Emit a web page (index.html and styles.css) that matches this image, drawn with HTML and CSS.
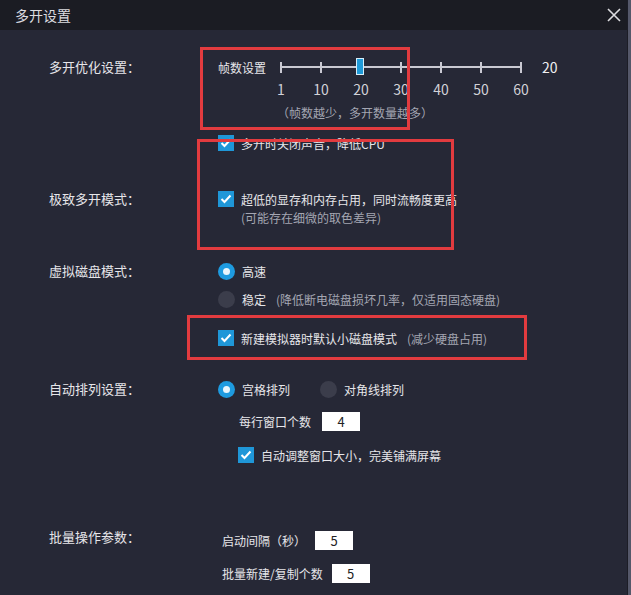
FILE: index.html
```html
<!DOCTYPE html>
<html lang="zh-CN">
<head>
    <meta charset="UTF-8">
    <title>多开设置</title>
    <link rel="stylesheet" href="styles.css">
</head>
<body>
    <div class="window">
        <div class="title-bar">
            <span class="title">多开设置</span>
            <span class="close">
                <svg width="14" height="14" viewBox="0 0 14 14"><path d="M1 1L13 13M13 1L1 13" stroke="#dcdce0" stroke-width="1.6" fill="none"/></svg>
            </span>
        </div>

        <div class="content">
            <!-- 多开优化 -->
            <div class="row">
                <div class="label">多开优化设置：</div>
                <div class="field">
                    <div class="slider-line">
                        <span class="slider-name">帧数设置</span>
                        <div class="track">
                            <i></i><i></i><i></i><i></i><i></i><i></i><i></i>
                            <span class="thumb"></span>
                        </div>
                        <span class="slider-value">20</span>
                    </div>
                    <div class="marks">
                        <span>1</span><span>10</span><span>20</span><span>30</span><span>40</span><span>50</span><span>60</span>
                    </div>
                    <div class="hint fps-hint">（帧数越少，多开数量越多）</div>
                    <div class="line check gap-10">
                        <span class="box"><svg width="12" height="10" viewBox="0 0 12 10"><path d="M1.5 5L4.5 8L10.5 1.5" stroke="#fff" stroke-width="2" fill="none"/></svg></span>
                        多开时关闭声音，降低CPU
                    </div>
                </div>
            </div>

            <!-- 极致多开 -->
            <div class="row gap-36">
                <div class="label">极致多开模式：</div>
                <div class="field">
                    <div class="line check">
                        <span class="box"><svg width="12" height="10" viewBox="0 0 12 10"><path d="M1.5 5L4.5 8L10.5 1.5" stroke="#fff" stroke-width="2" fill="none"/></svg></span>
                        超低的显存和内存占用，同时流畅度更高
                    </div>
                    <div class="hint sub">(可能存在细微的取色差异)</div>
                </div>
            </div>

            <!-- 虚拟磁盘 -->
            <div class="row gap-34">
                <div class="label">虚拟磁盘模式：</div>
                <div class="field">
                    <div class="line"><span class="radio on"></span>高速</div>
                    <div class="line gap-8"><span class="radio"></span>稳定<span class="hint note">(降低断电磁盘损坏几率，仅适用固态硬盘)</span></div>
                    <div class="line check gap-19">
                        <span class="box"><svg width="12" height="10" viewBox="0 0 12 10"><path d="M1.5 5L4.5 8L10.5 1.5" stroke="#fff" stroke-width="2" fill="none"/></svg></span>
                        新建模拟器时默认小磁盘模式<span class="hint small">(减少硬盘占用)</span>
                    </div>
                </div>
            </div>

            <!-- 自动排列 -->
            <div class="row gap-31">
                <div class="label">自动排列设置：</div>
                <div class="field">
                    <div class="line">
                        <span class="radio on"></span>宫格排列
                        <span class="radio second"></span>对角线排列
                    </div>
                    <div class="line gap-12 indent-21">每行窗口个数<span class="input">4</span></div>
                    <div class="line check gap-14 indent-20">
                        <span class="box"><svg width="12" height="10" viewBox="0 0 12 10"><path d="M1.5 5L4.5 8L10.5 1.5" stroke="#fff" stroke-width="2" fill="none"/></svg></span>
                        自动调整窗口大小，完美铺满屏幕
                    </div>
                </div>
            </div>

            <!-- 批量操作 -->
            <div class="row gap-65">
                <div class="label raise">批量操作参数：</div>
                <div class="field">
                    <div class="line indent-4">启动间隔（秒）<span class="input">5</span></div>
                    <div class="line gap-13 indent-4">批量新建/复制个数<span class="input">5</span></div>
                </div>
            </div>
        </div>

        <!-- annotation boxes -->
        <div class="mark mark-fps"></div>
        <div class="mark mark-extreme"></div>
        <div class="mark mark-disk"></div>
    </div>
</body>
</html>
```

FILE: styles.css
```css
body {
    margin: 0;
    background: #55586a;
    font-family: "Noto Sans CJK SC", "Liberation Sans", sans-serif;
    color: #e6e6ea;
}
.window {
    position: relative;
    width: 627px;
    height: 595px;
    background: #262836;
    border-right: 1px solid #1c1d26;
    overflow: hidden;
}
.title-bar {
    height: 30px;
    background: #1b1c23;
    display: flex;
    align-items: center;
    justify-content: space-between;
    padding: 0 6px 0 15px;
}
.title {
    font-size: 14px;
    color: #dcdce0;
}
.close {
    display: flex;
}
.content {
    padding: 27px 0 0 49px;
}
.row {
    display: grid;
    grid-template-columns: 169px 1fr;
}
.label {
    font-size: 13px;
    line-height: 20px;
}
.label.raise {
    margin-top: -3px;
}
.line {
    display: flex;
    align-items: center;
    height: 20px;
    font-size: 12px;
}
.hint {
    color: #a4a6b2;
    font-size: 12px;
}
.fps-hint {
    line-height: 20px;
    margin-top: 4px;
    padding-left: 59px;
}
.sub {
    line-height: 18px;
    padding-left: 23px;
}
.note {
    margin-left: 10px;
}
.small {
    margin-left: 10px;
}

/* slider */
.slider-line {
    display: flex;
    align-items: center;
    height: 20px;
    font-size: 12px;
}
.slider-name {
    width: 62px;
}
.track {
    position: relative;
    width: 242px;
    height: 20px;
    display: flex;
    align-items: center;
    justify-content: space-between;
}
.track::before {
    content: "";
    position: absolute;
    left: 0;
    right: 0;
    top: 9px;
    height: 2px;
    background: #c9c9d2;
}
.track i {
    width: 2px;
    height: 11px;
    background: #c9c9d2;
}
.thumb {
    position: absolute;
    left: 76px;
    top: 1px;
    width: 6px;
    height: 15px;
    background: #1e9ad8;
    border: 1px solid #d6eef9;
}
.slider-value {
    margin-left: 20px;
    font-size: 14px;
    color: #f0f0f2;
}
.marks {
    display: flex;
    margin: 2px 0 0 43px;
    height: 20px;
    line-height: 20px;
    font-size: 14px;
    color: #d2d2d8;
}
.marks span {
    width: 40px;
    text-align: center;
}

/* checkbox & radio */
.box {
    width: 16px;
    height: 16px;
    background: #1f97d8;
    display: flex;
    align-items: center;
    justify-content: center;
    margin-right: 7px;
    flex-shrink: 0;
}
.radio {
    width: 17px;
    height: 17px;
    border-radius: 50%;
    background: #3b3d4b;
    margin-right: 7px;
    box-sizing: border-box;
    position: relative;
    flex-shrink: 0;
}
.radio.on {
    background: #1e9be0;
}
.radio.on::after {
    content: "";
    position: absolute;
    left: 5px;
    top: 5px;
    width: 7px;
    height: 7px;
    border-radius: 50%;
    background: #e9f6fd;
}
.radio.second {
    margin-left: 30px;
}
.input {
    width: 38px;
    height: 19px;
    background: #fff;
    color: #222;
    font-size: 13px;
    line-height: 19px;
    text-align: center;
    margin-left: 11px;
}
.indent-4 .input {
    margin-left: 9px;
}

/* spacing */
.gap-8 { margin-top: 8px; }
.gap-10 { margin-top: 10px; }
.gap-12 { margin-top: 12px; }
.gap-13 { margin-top: 13px; }
.gap-14 { margin-top: 14px; }
.gap-19 { margin-top: 19px; }
.gap-31 { margin-top: 31px; }
.gap-34 { margin-top: 34px; }
.gap-36 { margin-top: 36px; }
.gap-65 { margin-top: 65px; }
.indent-4 { padding-left: 4px; }
.indent-20 { padding-left: 20px; }
.indent-21 { padding-left: 21px; }

/* red annotation boxes */
.mark {
    position: absolute;
    border: 3px solid #e23b3f;
    box-sizing: border-box;
}
.mark-fps {
    left: 200px;
    top: 47px;
    width: 210px;
    height: 83px;
}
.mark-extreme {
    left: 197px;
    top: 139px;
    width: 257px;
    height: 111px;
}
.mark-disk {
    left: 187px;
    top: 315px;
    width: 340px;
    height: 45px;
}
```
